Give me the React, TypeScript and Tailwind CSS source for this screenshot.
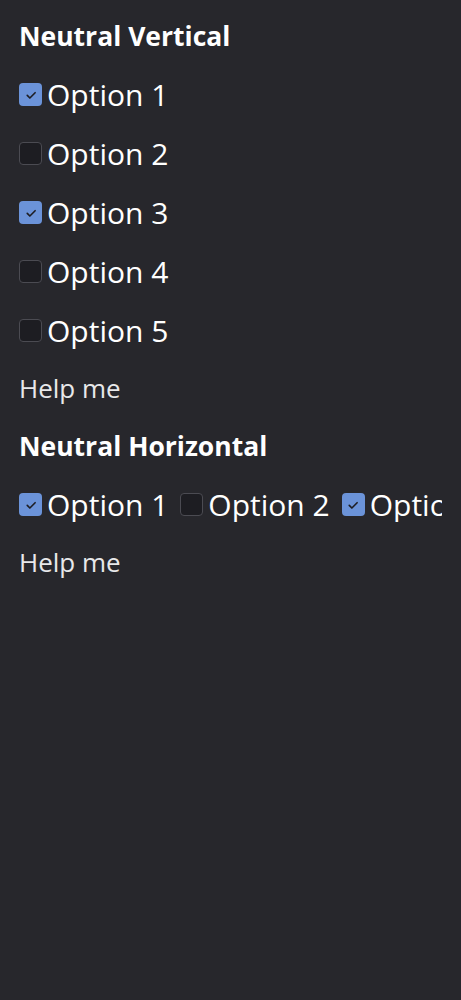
import React from 'react';

const font = { fontFamily: '"Open Sans", "Liberation Sans", sans-serif' };

function Box({ checked }: { checked: boolean }) {
  return checked ? (
    <span className="flex h-[23px] w-[23px] shrink-0 items-center justify-center rounded-[4px] bg-[#6b93d9]">
      <svg viewBox="0 0 24 24" className="h-[18px] w-[18px]" fill="none" stroke="#1e1e23" strokeWidth={2.2} strokeLinecap="round" strokeLinejoin="round">
        <path d="M7 12.5l3.5 3.5 7-7" />
      </svg>
    </span>
  ) : (
    <span className="h-[23px] w-[23px] shrink-0 rounded-[4px] border border-[#4b4b52] bg-[#1d1d22]" />
  );
}

function Option({ label, checked }: { label: string; checked: boolean }) {
  return (
    <label className="flex shrink-0 items-center gap-[5px] whitespace-nowrap text-[30px] leading-[35px] text-white">
      <Box checked={checked} />
      {label}
    </label>
  );
}

const opts = [
  { label: 'Option 1', checked: true },
  { label: 'Option 2', checked: false },
  { label: 'Option 3', checked: true },
  { label: 'Option 4', checked: false },
  { label: 'Option 5', checked: false },
];

export default function App() {
  return (
    <div className="min-h-[1000px] w-[461px] bg-[#27272c] px-[19px] pt-[19px]" style={font}>
      <h2 className="text-[26.5px] font-bold leading-[34px] text-white">Neutral Vertical</h2>
      <div className="mt-[24px] flex flex-col gap-[24px]">
        {opts.map((o) => (
          <Option key={o.label} {...o} />
        ))}
      </div>
      <p className="mt-[23px] text-[26px] leading-[34px] text-[#e8e8ea]">Help me</p>

      <h2 className="mt-[24px] text-[26.5px] font-bold leading-[34px] text-white">Neutral Horizontal</h2>
      <div className="mt-[24px] flex gap-[12px] overflow-hidden">
        {opts.map((o) => (
          <Option key={o.label} {...o} />
        ))}
      </div>
      <p className="mt-[23px] text-[26px] leading-[34px] text-[#e8e8ea]">Help me</p>
    </div>
  );
}
